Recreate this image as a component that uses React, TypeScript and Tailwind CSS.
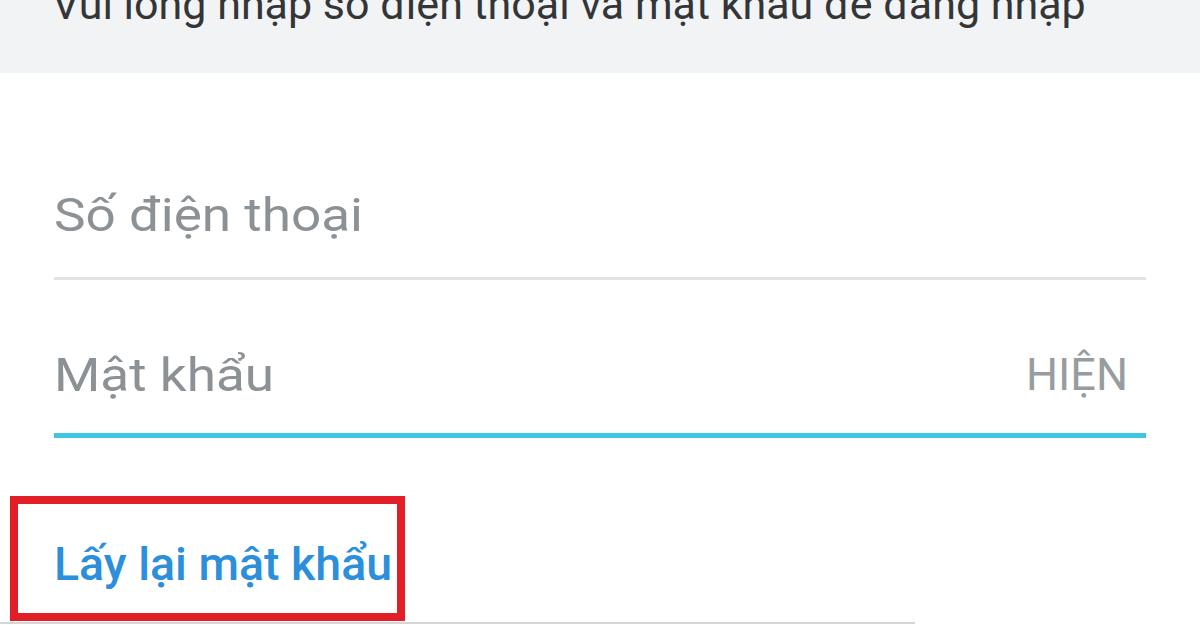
export default function App() {
  return (
    <div
      className="w-[1200px] h-[625px] overflow-hidden bg-white"
      style={{ fontFamily: "Roboto, 'Noto Sans', sans-serif" }}
    >
      {/* hint band, text cut off by the top of the shot */}
      <div className="h-[73px] bg-[#f2f3f5] overflow-hidden px-[52px]">
        <p className="mt-[-17px] text-[43px] leading-none text-[#333537] whitespace-nowrap">
          Vui lòng nhập số điện thoại và mật khẩu để đăng nhập
        </p>
      </div>

      <div className="px-[54px]">
        <div className="pt-[118px] pb-[39px] border-b-[3px] border-[#e3e3e3]">
          <span className="block h-[47px] text-[47px] leading-none text-[#8b9195] origin-left scale-x-[1.13]">
            Số điện thoại
          </span>
        </div>

        <div className="mt-[71px] pb-[35px] border-b-[5px] border-[#3dc7e2] flex items-end justify-between">
          <span className="block h-[47px] text-[47px] leading-none text-[#8b9195] origin-left scale-x-[1.13]">
            Mật khẩu
          </span>
          <span className="block h-[46px] text-[45px] leading-none text-[#979c9f] mr-[18px]">
            HIỆN
          </span>
        </div>
      </div>

      <div className="mt-[58px] ml-[10px] w-[395px] h-[125px] border-[8px] border-[#e21f26] pl-[36px] pt-[37px]">
        <a className="block text-[46.5px] leading-none font-medium text-[#2b8fdc] whitespace-nowrap">
          Lấy lại mật khẩu
        </a>
      </div>
      <div className="mt-[1px] h-[2px] w-[915px] bg-[#d6d6d6]" />
    </div>
  );
}
